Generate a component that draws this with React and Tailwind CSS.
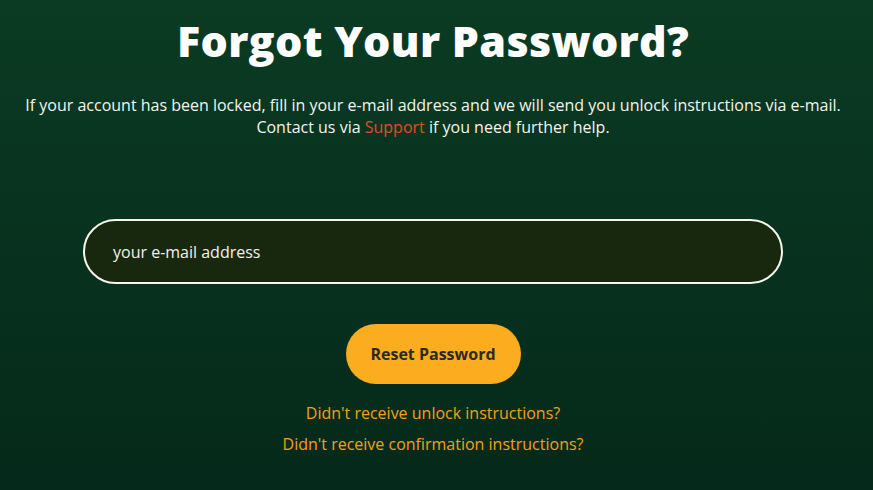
export default function App() {
  return (
    <div
      className="w-[873px] h-[490px] overflow-hidden bg-gradient-to-b from-[#0b3b23] to-[#05291a] flex flex-col items-center text-white pr-[7px]"
      style={{ fontFamily: '"Open Sans", "Lato", sans-serif' }}
    >
      <h1 className="mt-[13px] text-[43px] leading-[56px] font-extrabold tracking-[0.3px]">
        Forgot Your Password?
      </h1>
      <p className="mt-[25px] text-center text-[16px] leading-[22px] text-[#f4f4ee]">
        If your account has been locked, fill in your e-mail address and we will send you unlock instructions via e-mail.
        <br />
        Contact us via <span className="text-[#e64a2a]">Support</span> if you need further help.
      </p>
      <div className="mt-[81px] w-[700px] h-[65px] rounded-full border-2 border-[#f6f6ec] bg-[#18280f] flex items-center pl-[28px]">
        <span className="text-[16px] text-[#f2f2ea]">your e-mail address</span>
      </div>
      <button className="mt-[40px] w-[175px] h-[60px] rounded-full bg-[#fbad1f] text-[#2a2a1e] text-[16px] font-bold">
        Reset Password
      </button>
      <a className="mt-[18px] text-[16px] leading-[22px] text-[#f4a01c]">Didn't receive unlock instructions?</a>
      <a className="mt-[9px] text-[16px] leading-[22px] text-[#f4a01c]">Didn't receive confirmation instructions?</a>
    </div>
  );
}
